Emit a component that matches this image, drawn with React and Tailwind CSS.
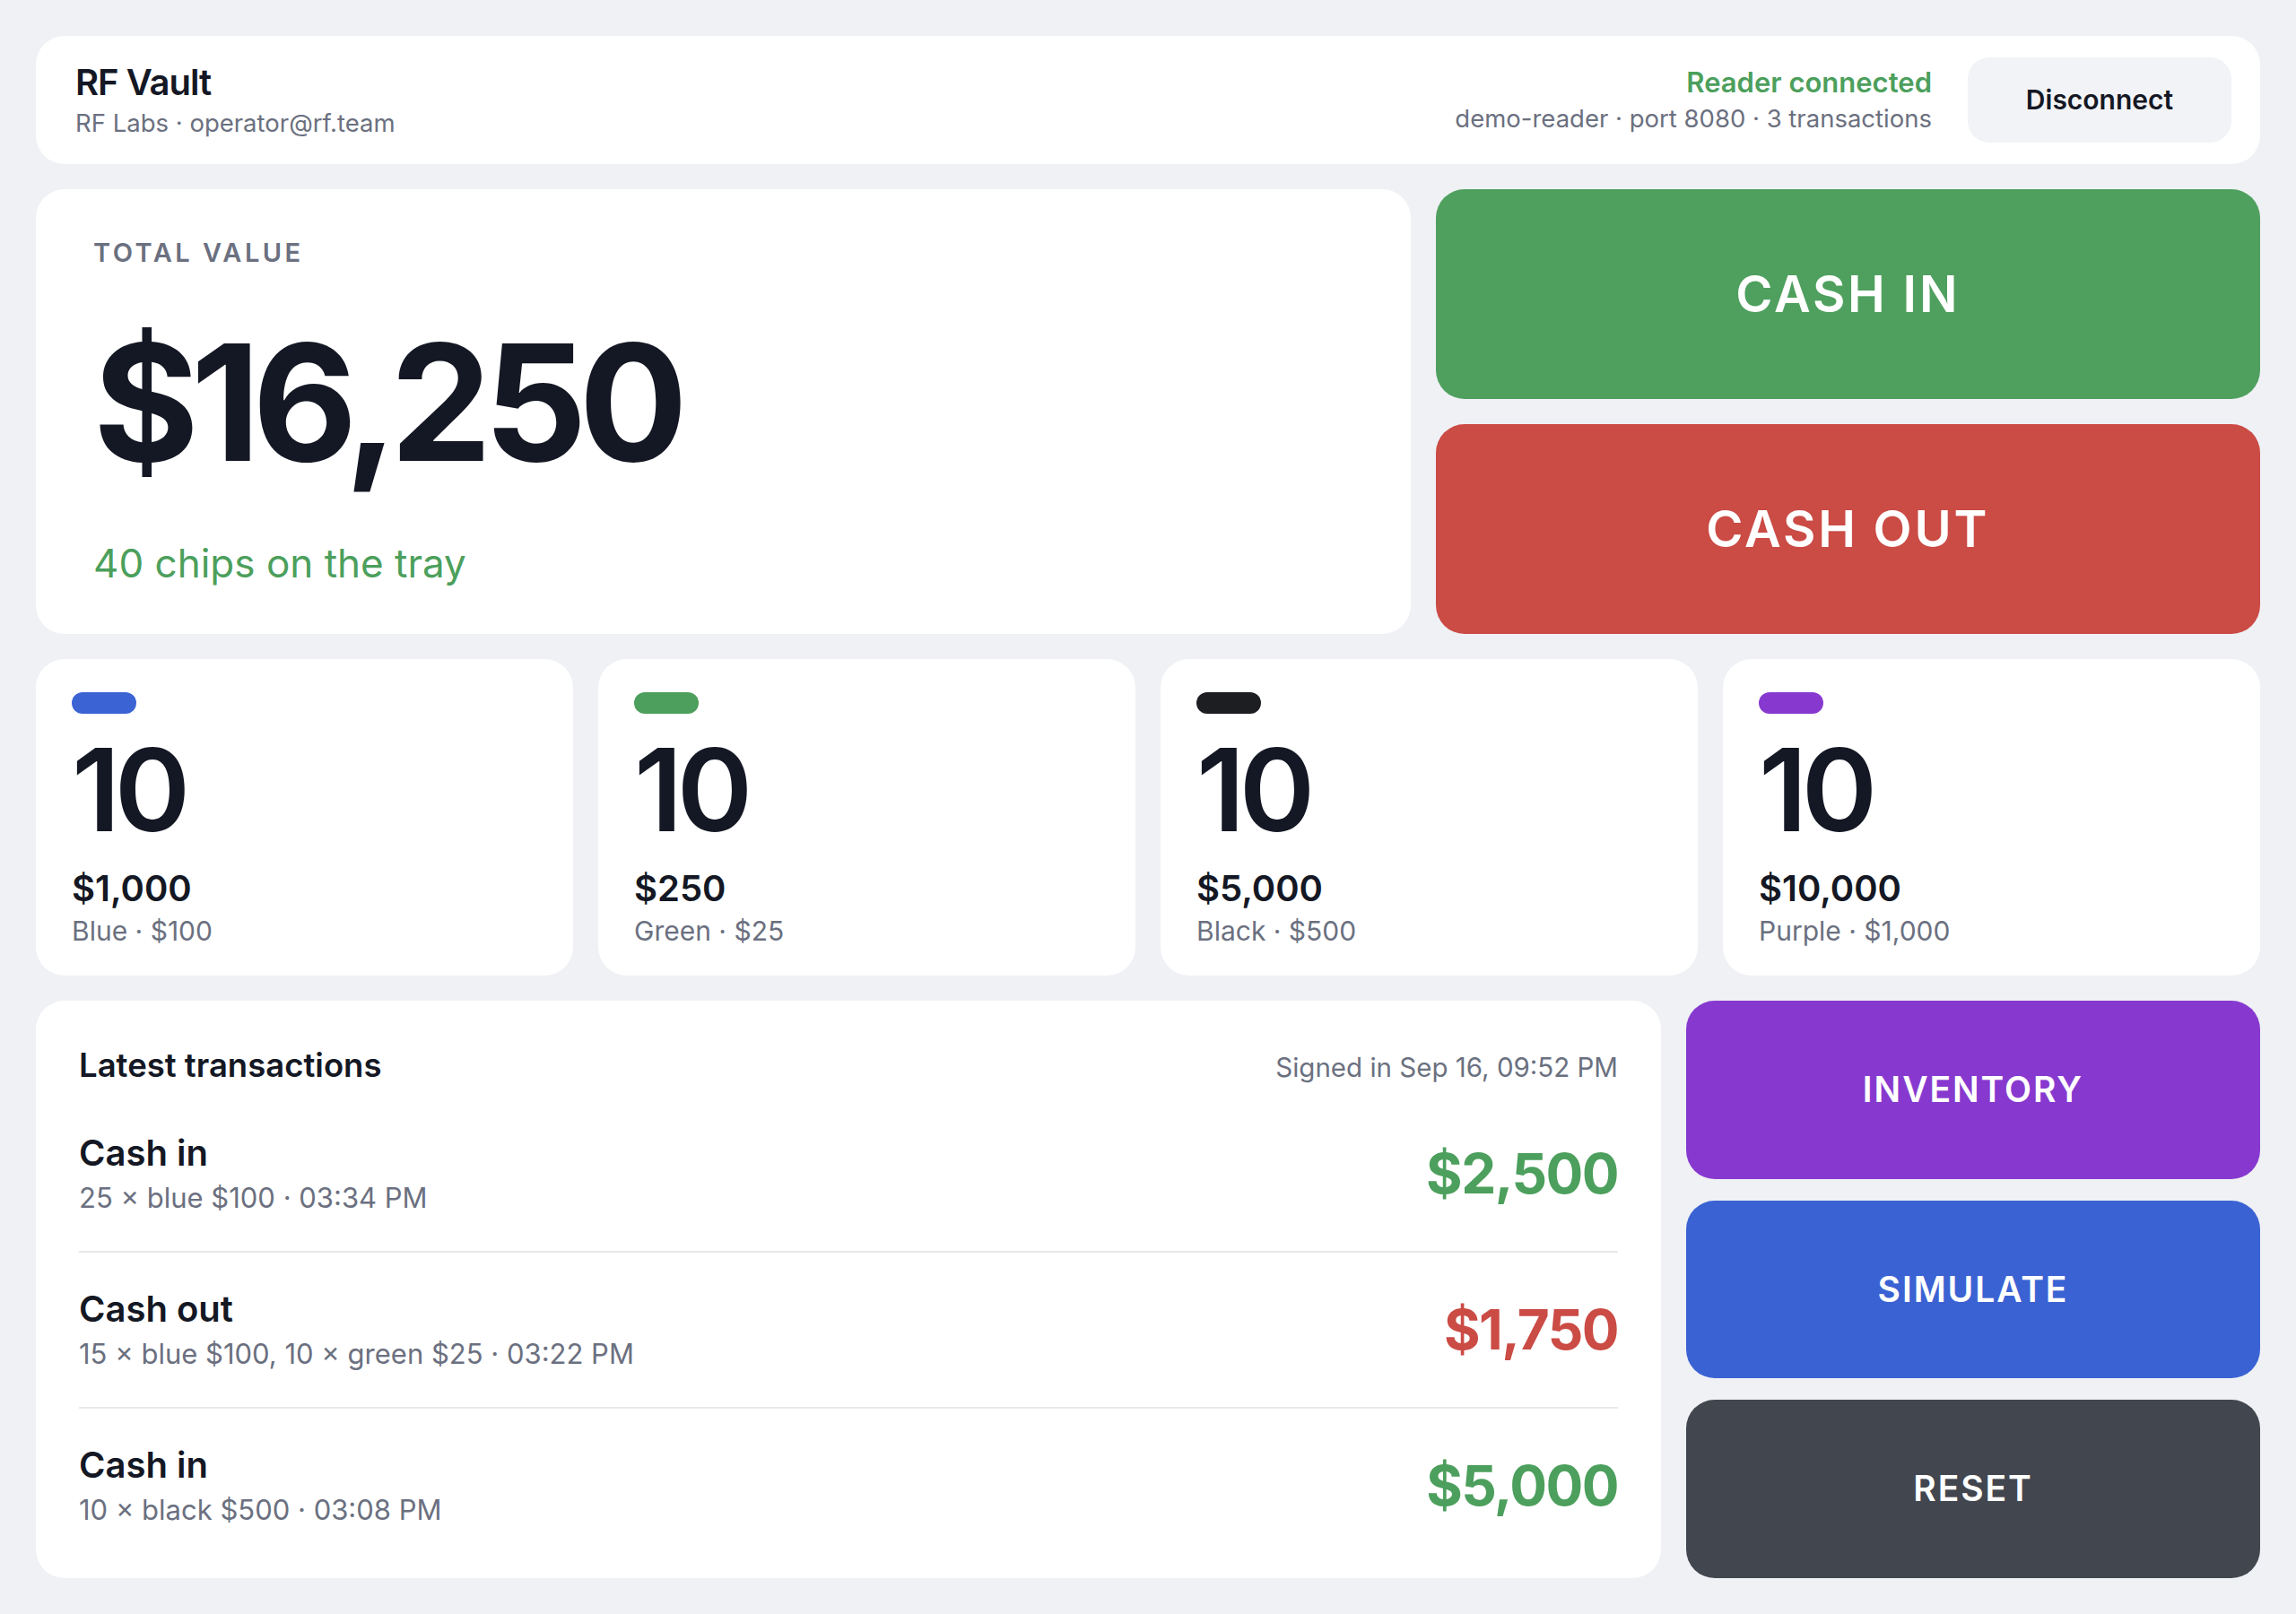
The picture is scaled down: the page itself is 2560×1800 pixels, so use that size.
import React from 'react';

const chips = [
  { color: 'bg-[#3b63d4]', count: 10, total: '$1,000', label: 'Blue · $100' },
  { color: 'bg-[#4c9f5c]', count: 10, total: '$250', label: 'Green · $25' },
  { color: 'bg-[#1d1e22]', count: 10, total: '$5,000', label: 'Black · $500' },
  { color: 'bg-[#8739cf]', count: 10, total: '$10,000', label: 'Purple · $1,000' },
];

const transactions = [
  { kind: 'Cash in', detail: '25 × blue $100 · 03:34 PM', amount: '$2,500', positive: true },
  { kind: 'Cash out', detail: '15 × blue $100, 10 × green $25 · 03:22 PM', amount: '$1,750', positive: false },
  { kind: 'Cash in', detail: '10 × black $500 · 03:08 PM', amount: '$5,000', positive: true },
];

const ChipCard = ({ chip }) => (
  <div className="bg-white rounded-[32px] px-10 pt-[37px] flex flex-col">
    <div className={`w-[72px] h-6 rounded-full ${chip.color}`} />
    <div className="mt-[21px] text-[128px] leading-none font-semibold tracking-tighter">{chip.count}</div>
    <div className="mt-[26px] text-[40px] leading-none font-semibold">{chip.total}</div>
    <div className="mt-3 text-[30px] leading-none text-[#6b7080]">{chip.label}</div>
  </div>
);

const App = () => {
  return (
    <div className="h-screen bg-[#eff1f5] p-10 flex flex-col gap-7 text-[#141824] font-['Inter',sans-serif]">
      {/* header */}
      <div className="h-[143px] shrink-0 bg-white rounded-[32px] pl-11 pr-8 flex items-center justify-between">
        <div>
          <div className="text-[40px] leading-none font-semibold tracking-tight">RF Vault</div>
          <div className="mt-3 text-[27.5px] leading-none text-[#6b7080]">RF Labs · operator@rf.team</div>
        </div>
        <div className="flex items-center gap-10">
          <div className="text-right">
            <div className="text-[31px] leading-none font-semibold text-[#4c9f5c]">Reader connected</div>
            <div className="mt-3 text-[27.5px] leading-none text-[#6b7080]">demo-reader · port 8080 · 3 transactions</div>
          </div>
          <button className="w-[294px] h-[95px] rounded-[24px] bg-[#f2f3f6] text-[30px] font-semibold">
            Disconnect
          </button>
        </div>
      </div>

      {/* total + main actions */}
      <div className="h-[496px] shrink-0 grid grid-cols-[5fr_3fr] gap-7">
        <div className="bg-white rounded-[32px] pl-16 pt-14">
          <div className="text-[29px] leading-none font-semibold tracking-[0.12em] text-[#6b7080]">TOTAL VALUE</div>
          <div className="mt-[63px] text-[180px] leading-none font-bold tracking-tighter">$16,250</div>
          <div className="mt-[67px] text-[44px] leading-none text-[#4c9f5c]">40 chips on the tray</div>
        </div>
        <div className="flex flex-col gap-7">
          <button className="flex-1 rounded-[32px] bg-[#4fa05e] text-white text-[56px] font-semibold tracking-wider">
            CASH IN
          </button>
          <button className="flex-1 rounded-[32px] bg-[#cb4b45] text-white text-[56px] font-semibold tracking-wider">
            CASH OUT
          </button>
        </div>
      </div>

      {/* chips on the tray */}
      <div className="h-[353px] shrink-0 grid grid-cols-4 gap-7">
        {chips.map((chip) => (
          <ChipCard key={chip.label} chip={chip} />
        ))}
      </div>

      {/* transactions + tools */}
      <div className="flex-1 min-h-0 grid grid-cols-[1fr_640px] gap-7">
        <div className="bg-white rounded-[32px] px-12 pt-[54px]">
          <div className="flex items-baseline justify-between mb-4">
            <div className="text-[36.5px] leading-none font-semibold">Latest transactions</div>
            <div className="text-[29.5px] leading-none text-[#6b7080]">Signed in Sep 16, 09:52 PM</div>
          </div>
          {transactions.map((tx, i) => (
            <div
              key={i}
              className={`flex items-center justify-between py-[43.5px] ${i < transactions.length - 1 ? 'border-b-2 border-[#e8e9ec]' : ''}`}
            >
              <div>
                <div className="text-[40px] leading-none font-semibold">{tx.kind}</div>
                <div className="mt-[14px] text-[31px] leading-none text-[#6b7080]">{tx.detail}</div>
              </div>
              <div className={`text-[62px] leading-none font-bold tracking-tight ${tx.positive ? 'text-[#4c9f5c]' : 'text-[#cb4b45]'}`}>
                {tx.amount}
              </div>
            </div>
          ))}
        </div>
        <div className="flex flex-col gap-6">
          <button className="flex-1 rounded-[32px] bg-[#8739cf] text-white text-[39px] font-semibold tracking-wider">INVENTORY</button>
          <button className="flex-1 rounded-[32px] bg-[#3b62d3] text-white text-[39px] font-semibold tracking-wider">SIMULATE</button>
          <button className="flex-1 rounded-[32px] bg-[#42464f] text-white text-[39px] font-semibold tracking-wider">RESET</button>
        </div>
      </div>
    </div>
  );
};

export default App;
